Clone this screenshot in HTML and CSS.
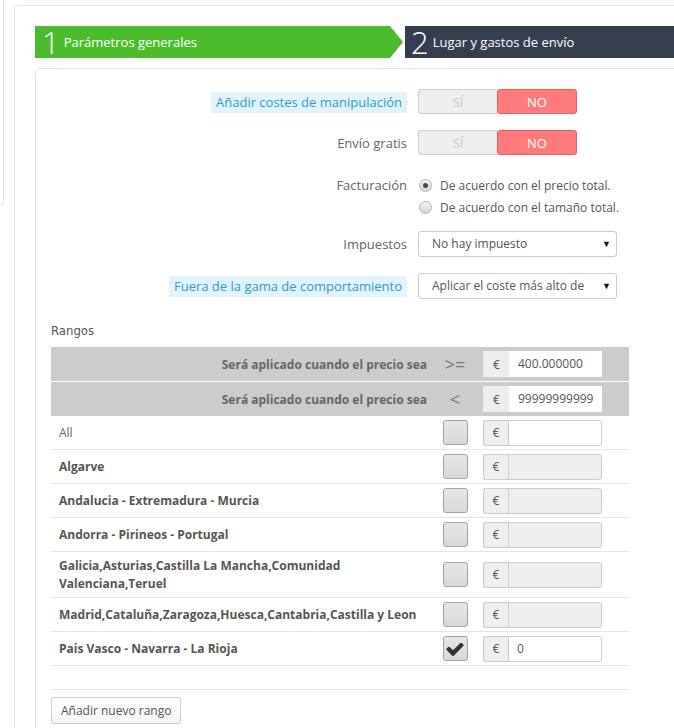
FILE: index.html
```html
<!DOCTYPE html>
<html lang="es">
<head>
  <meta charset="UTF-8">
  <title>Transportista - Lugar y gastos de envío</title>
  <link rel="stylesheet" href="styles.css">
</head>
<body>
  <div class="page">
    <!-- panel lateral (casi fuera de la pantalla) -->
    <div class="side-panel"></div>

    <div class="panel">
      <!-- pasos del asistente -->
      <div class="steps">
        <div class="step step-done">
          <span class="step-num">1</span>
          <span class="step-name">Parámetros generales</span>
        </div>
        <div class="step step-current">
          <span class="step-num">2</span>
          <span class="step-name">Lugar y gastos de envío</span>
        </div>
      </div>

      <div class="inner-panel">
        <div class="form-row">
          <div class="form-label"><span class="hint">Añadir costes de manipulación</span></div>
          <div class="switch">
            <span class="switch-off">SÍ</span>
            <span class="switch-on">NO</span>
          </div>
        </div>

        <div class="form-row">
          <div class="form-label">Envío gratis</div>
          <div class="switch">
            <span class="switch-off">SÍ</span>
            <span class="switch-on">NO</span>
          </div>
        </div>

        <div class="form-row form-row-radios">
          <div class="form-label">Facturación</div>
          <div class="radios">
            <div class="radio"><span class="radio-dot checked"></span>De acuerdo con el precio total.</div>
            <div class="radio"><span class="radio-dot"></span>De acuerdo con el tamaño total.</div>
          </div>
        </div>

        <div class="form-row">
          <div class="form-label">Impuestos</div>
          <div class="select">
            <span class="select-value">No hay impuesto</span>
            <span class="select-arrow">▼</span>
          </div>
        </div>

        <div class="form-row">
          <div class="form-label"><span class="hint">Fuera de la gama de comportamiento</span></div>
          <div class="select">
            <span class="select-value">Aplicar el coste más alto de los rangos definidos</span>
            <span class="select-arrow">▼</span>
          </div>
        </div>

        <div class="ranges-title">Rangos</div>

        <div class="ranges">
          <div class="range-row range-head">
            <div class="range-label">Será aplicado cuando el precio sea</div>
            <div class="range-op">&gt;=</div>
            <div class="range-value">
              <div class="input-group input-group-head">
                <span class="addon">€</span><span class="input">400.000000</span>
              </div>
            </div>
          </div>
          <div class="range-row range-head">
            <div class="range-label">Será aplicado cuando el precio sea</div>
            <div class="range-op">&lt;</div>
            <div class="range-value">
              <div class="input-group input-group-head">
                <span class="addon">€</span><span class="input">99999999999</span>
              </div>
            </div>
          </div>

          <div class="range-row">
            <div class="zone zone-all">All</div>
            <div class="range-op"><span class="check"></span></div>
            <div class="range-value">
              <div class="input-group"><span class="addon">€</span><span class="input"></span></div>
            </div>
          </div>
          <div class="range-row">
            <div class="zone">Algarve</div>
            <div class="range-op"><span class="check"></span></div>
            <div class="range-value">
              <div class="input-group"><span class="addon">€</span><span class="input disabled"></span></div>
            </div>
          </div>
          <div class="range-row">
            <div class="zone">Andalucia - Extremadura - Murcia</div>
            <div class="range-op"><span class="check"></span></div>
            <div class="range-value">
              <div class="input-group"><span class="addon">€</span><span class="input disabled"></span></div>
            </div>
          </div>
          <div class="range-row">
            <div class="zone">Andorra - Pirineos - Portugal</div>
            <div class="range-op"><span class="check"></span></div>
            <div class="range-value">
              <div class="input-group"><span class="addon">€</span><span class="input disabled"></span></div>
            </div>
          </div>
          <div class="range-row">
            <div class="zone">Galicia,Asturias,Castilla La Mancha,Comunidad<br>Valenciana,Teruel</div>
            <div class="range-op"><span class="check"></span></div>
            <div class="range-value">
              <div class="input-group"><span class="addon">€</span><span class="input disabled"></span></div>
            </div>
          </div>
          <div class="range-row">
            <div class="zone">Madrid,Cataluña,Zaragoza,Huesca,Cantabria,Castilla y Leon</div>
            <div class="range-op"><span class="check"></span></div>
            <div class="range-value">
              <div class="input-group"><span class="addon">€</span><span class="input disabled"></span></div>
            </div>
          </div>
          <div class="range-row">
            <div class="zone">Pais Vasco - Navarra - La Rioja</div>
            <div class="range-op">
              <span class="check">
                <svg viewBox="0 0 1792 1792" width="20" height="20"><path d="M1671 566q0 40-28 68l-724 724-136 136q-28 28-68 28t-68-28l-136-136-362-362q-28-28-28-68t28-68l136-136q28-28 68-28t68 28l294 295 656-657q28-28 68-28t68 28l136 136q28 28 28 68z" fill="#333"/></svg>
              </span>
            </div>
            <div class="range-value">
              <div class="input-group"><span class="addon">€</span><span class="input">0</span></div>
            </div>
          </div>
          <div class="range-row range-empty"></div>
        </div>

        <button class="btn">Añadir nuevo rango</button>
      </div>
    </div>
  </div>
</body>
</html>
```

FILE: styles.css
```css
* {
  margin: 0;
  padding: 0;
  box-sizing: border-box;
}

body {
  font-family: "Open Sans", "Liberation Sans", sans-serif;
  font-size: 12px;
  color: #555;
  background-color: white;
  overflow: hidden;
}

.page {
  display: flex;
  align-items: flex-start;
  gap: 10px;
}

/* panel lateral */
.side-panel {
  width: 4px;
  height: 206px;
  flex-shrink: 0;
  border-right: 1px solid #e3e3e3;
  border-bottom: 1px solid #e3e3e3;
  border-bottom-right-radius: 5px;
}

/* panel principal */
.panel {
  width: 800px;
  flex-shrink: 0;
  margin-top: 5px;
  padding: 20px 20px 0 20px;
  border: 1px solid #e3e3e3;
  border-bottom: none;
  border-radius: 5px 5px 0 0;
}

/* pasos del asistente */
.steps {
  display: flex;
  gap: 2px;
  height: 32px;
}

.step {
  display: flex;
  align-items: center;
  color: white;
}

.step-done {
  width: 368px;
  padding-left: 7px;
  background-color: #4cbc2c;
  clip-path: polygon(0 0, calc(100% - 13px) 0, 100% 50%, calc(100% - 13px) 100%, 0 100%);
}

.step-current {
  flex: 1;
  padding-left: 6px;
  background-color: #353e4f;
}

.step-num {
  font-size: 31px;
  font-weight: 300;
  line-height: 32px;
  margin-right: 4px;
}

.step-name {
  font-size: 13px;
}

/* formulario */
.inner-panel {
  margin-top: 10px;
  padding: 20px 15px 30px 15px;
  border: 1px solid #e3e3e3;
  border-radius: 5px;
}

.form-row {
  display: grid;
  grid-template-columns: 356px 1fr;
  column-gap: 11px;
  align-items: center;
  margin-bottom: 16px;
}

.form-label {
  text-align: right;
  font-size: 13px;
  color: #666;
}

.hint {
  padding: 1px 5px 2px 5px;
  background-color: #e3f3fa;
  color: #2a9cc8;
}

.form-row-radios {
  align-items: start;
  padding-top: 3px;
  margin-bottom: 13px;
}

.form-row-radios .form-label {
  line-height: 22px;
}

/* interruptor SÍ / NO */
.switch {
  display: flex;
  width: 159px;
  height: 25px;
}

.switch span {
  flex: 1;
  display: flex;
  align-items: center;
  justify-content: center;
  font-size: 13px;
}

.switch-off {
  background-color: #eeeeee;
  border: 1px solid #cfcfcf;
  border-right: none;
  border-radius: 3px 0 0 3px;
  color: #c8c8c8;
}

.switch-on {
  background-color: #ff7a7a;
  border: 1px solid #e85f5f;
  border-radius: 3px;
  color: white;
}

/* radios */
.radio {
  display: flex;
  align-items: center;
  height: 22px;
  color: #555;
}

.radio-dot {
  width: 13px;
  height: 13px;
  margin: 0 8px 0 1px;
  border: 1px solid #b5b5b5;
  border-radius: 50%;
  background: linear-gradient(#f4f4f4, #d6d6d6);
  display: flex;
  align-items: center;
  justify-content: center;
}

.radio-dot.checked::before {
  content: "";
  width: 5px;
  height: 5px;
  border-radius: 50%;
  background-color: #444;
}

/* select */
.select {
  display: flex;
  width: 199px;
  height: 26px;
  border: 1px solid #cccccc;
  border-radius: 3px;
  background-color: white;
  line-height: 24px;
}

.select-value {
  flex: 1;
  padding-left: 13px;
  white-space: nowrap;
  overflow: hidden;
}

.select-arrow {
  width: 31px;
  padding-right: 5px;
  text-align: right;
  font-size: 9px;
  color: #111;
}

/* rangos */
.ranges-title {
  margin-top: 22px;
  margin-bottom: 6px;
  line-height: 20px;
  font-family: "DejaVu Sans Condensed", "Roboto Condensed", Roboto, sans-serif;
  font-stretch: condensed;
  font-size: 13px;
  color: #555;
}

.ranges {
  width: 578px;
}

.range-row {
  display: grid;
  grid-template-columns: 382px 44px 152px;
  align-items: center;
  min-height: 34px;
  border-bottom: 1px solid #e6e6e6;
}

.range-head {
  background-color: #cccccc;
  border-bottom: 1px solid white;
  min-height: 35px;
}

.range-head:nth-child(2) {
  border-bottom: none;
  min-height: 34px;
}

.range-label {
  text-align: right;
  padding-right: 6px;
  font-weight: bold;
  color: #666;
}

.range-head .range-op {
  font-size: 18px;
  color: #777;
  line-height: 22px;
}

.range-op {
  display: flex;
  justify-content: center;
}

.range-value {
  padding-left: 6px;
}

.zone {
  padding: 5px 0 4px 8px;
  font-weight: bold;
  line-height: 18px;
  color: #555;
}

.zone-all {
  font-weight: normal;
  color: #666;
}

.range-empty {
  min-height: 24px;
}

/* casilla */
.check {
  width: 25px;
  height: 25px;
  border: 1px solid #a3a3a3;
  border-radius: 3px;
  background: linear-gradient(#e6e6e6, #d9d9d9);
  display: flex;
  align-items: center;
  justify-content: center;
}

/* grupo de entrada */
.input-group {
  display: flex;
  width: 119px;
  height: 26px;
}

.addon {
  width: 25px;
  display: flex;
  align-items: center;
  justify-content: center;
  background-color: #efefef;
  border: 1px solid #cccccc;
  border-right: none;
  border-radius: 3px 0 0 3px;
  color: #555;
}

.input {
  flex: 1;
  padding-left: 8px;
  line-height: 24px;
  background-color: white;
  border: 1px solid #cccccc;
  border-radius: 0 3px 3px 0;
  color: #555;
}

.input.disabled {
  background-color: #eeeeee;
}

.input-group-head .addon,
.input-group-head .input {
  border-color: transparent;
  border-radius: 0;
}

.input-group-head .addon {
  background-color: #eeeeee;
  width: 26px;
}

.btn {
  margin-top: 7px;
  height: 27px;
  padding: 0 9px;
  font-family: "Open Sans", "Liberation Sans", sans-serif;
  font-size: 12px;
  color: #555;
  background: linear-gradient(#ffffff, #f5f5f5);
  border: 1px solid #cccccc;
  border-radius: 3px;
  cursor: pointer;
}
```
